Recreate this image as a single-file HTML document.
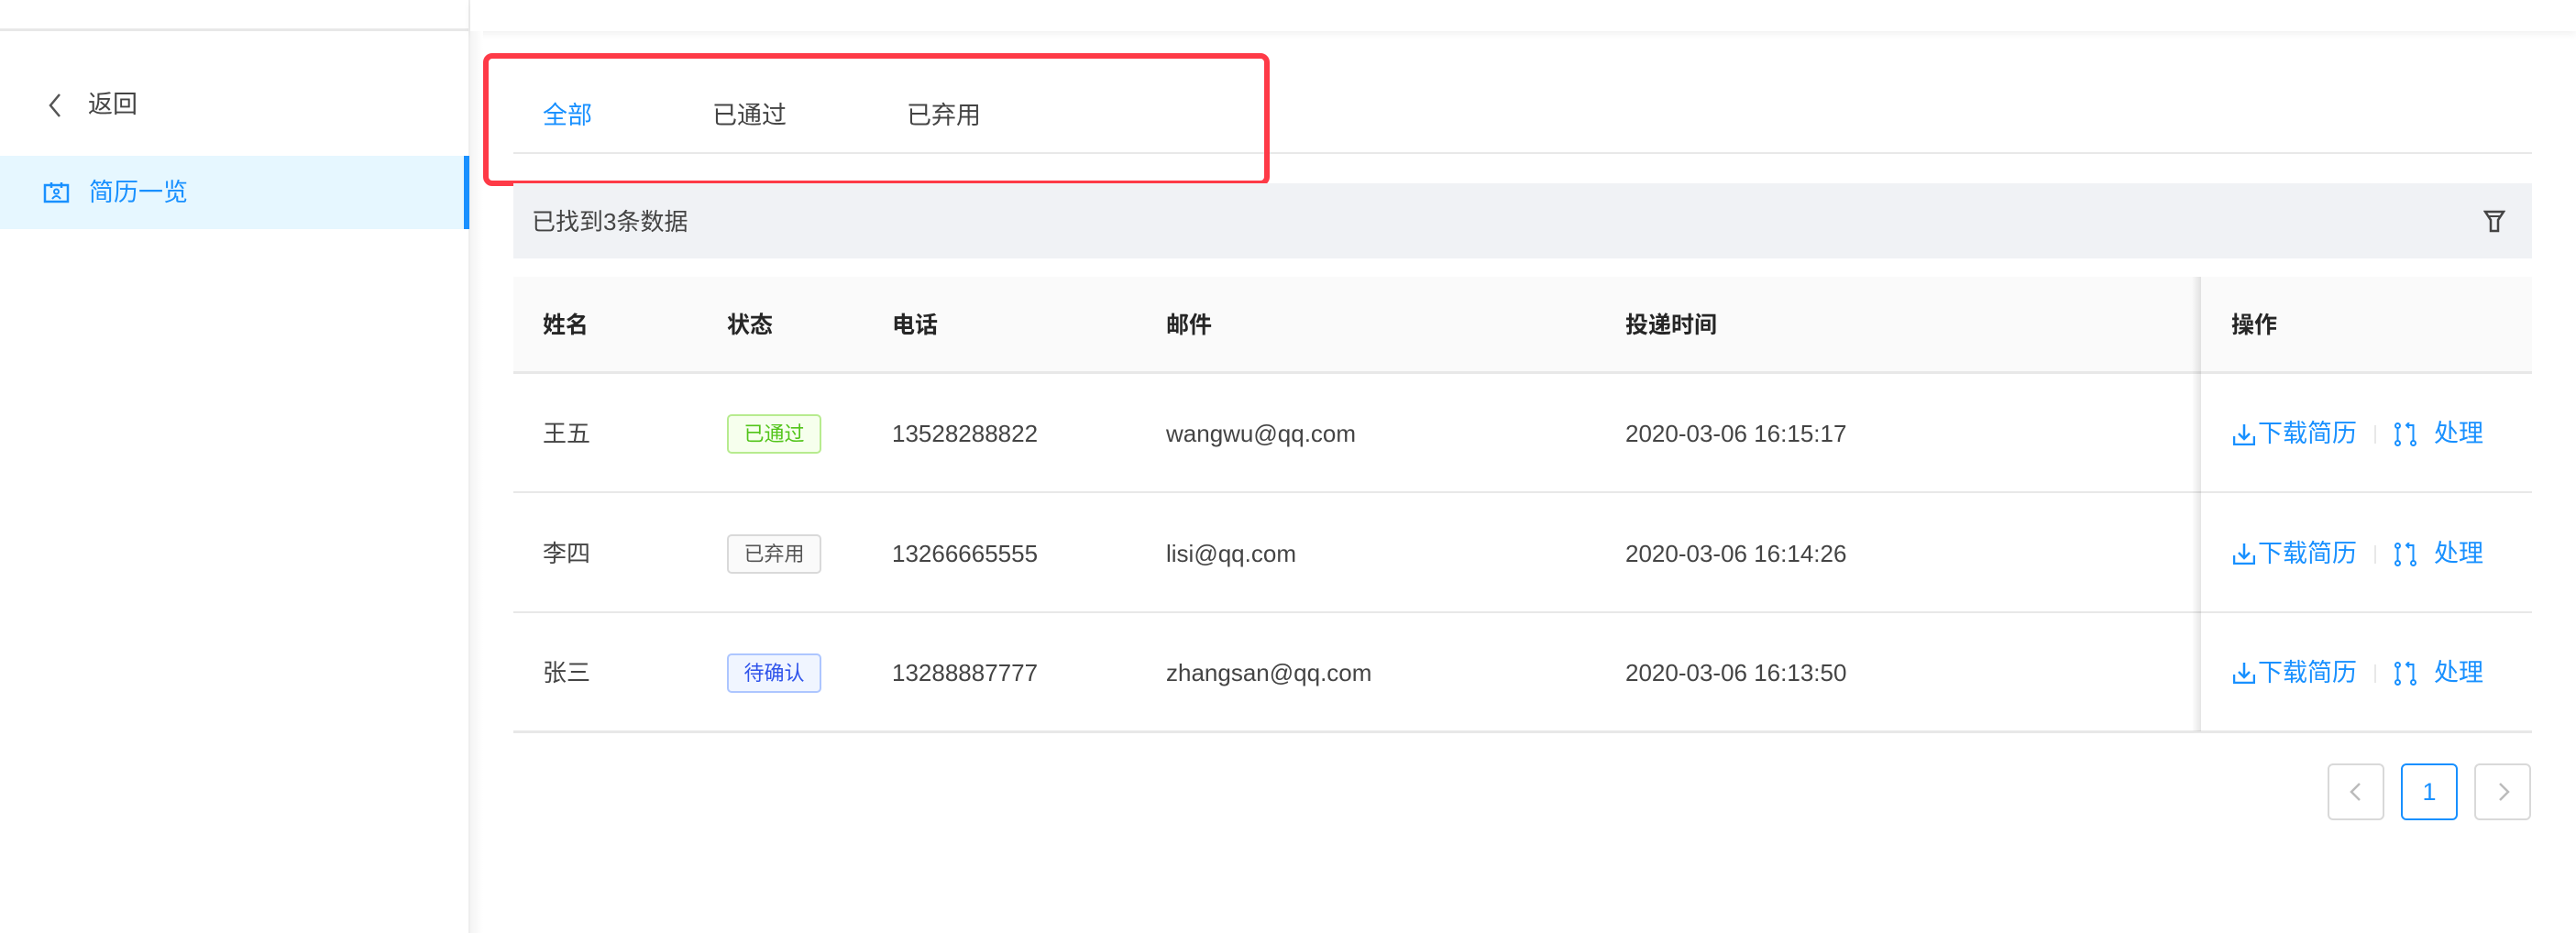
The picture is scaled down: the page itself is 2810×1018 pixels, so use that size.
<!DOCTYPE html>
<html><head><meta charset="utf-8"><style>
*{margin:0;padding:0;box-sizing:border-box}
body{width:2810px;height:1018px;background:#fff;font-family:"Liberation Sans","Noto Sans CJK SC",sans-serif;position:relative;overflow:hidden;color:#333;font-size:25px}
.a{position:absolute;white-space:nowrap;line-height:30px}
.tag{position:absolute;height:43px;width:103px;border:2px solid;border-radius:5px;font-size:22px;line-height:39px;text-align:center}
.op{color:#1890ff;font-size:27px}
.h{font-weight:bold;color:#262626}
</style></head><body>
<div class="a" style="left:0;top:0;width:512px;height:34px;border-bottom:3px solid #e8e8e8"></div>
<div class="a" style="left:511px;top:0;width:2px;height:1018px;background:#eee"></div>
<div class="a" style="left:513px;top:0;width:2297px;height:34px;box-shadow:0 3px 8px rgba(0,0,0,0.06);background:#fff"></div>
<div class="a" style="left:513px;top:34px;width:14px;height:984px;background:linear-gradient(90deg,#f4f4f4,#fff)"></div>
<svg class="a" style="left:50px;top:100px" width="20" height="30" viewBox="0 0 20 30"><path d="M15 3 L5 15 L15 27" fill="none" stroke="#555" stroke-width="2.5"/></svg>
<div class="a" style="left:96px;top:99px;font-size:27px;color:#444">返回</div>
<div class="a" style="left:0;top:170px;width:506px;height:80px;background:#e6f7ff"></div>
<div class="a" style="left:506px;top:170px;width:6px;height:80px;background:#1890ff"></div>
<svg class="a" style="left:47px;top:198px" width="30" height="24" viewBox="0 0 30 24"><rect x="2" y="4" width="25" height="18" fill="none" stroke="#1890ff" stroke-width="2.5"/><path d="M9 1v6M20 1v6" stroke="#1890ff" stroke-width="2.5"/><circle cx="14.5" cy="11" r="2.5" fill="none" stroke="#1890ff" stroke-width="2"/><path d="M10 19q4.5-6 9 0" fill="none" stroke="#1890ff" stroke-width="2"/></svg>
<div class="a" style="left:97px;top:195px;font-size:27px;color:#1890ff">简历一览</div>

<div class="a" style="left:592px;top:111px;font-size:27px;color:#1890ff">全部</div>
<div class="a" style="left:777px;top:111px;font-size:27px;color:#444">已通过</div>
<div class="a" style="left:989px;top:111px;font-size:27px;color:#444">已弃用</div>
<div class="a" style="left:560px;top:166px;width:2202px;height:2px;background:#e8e8e8"></div>
<div class="a" style="left:527px;top:58px;width:858px;height:145px;border:6px solid #fe3a47;border-radius:10px"></div>

<div class="a" style="left:560px;top:200px;width:2202px;height:82px;background:#f0f2f5"></div>
<div class="a" style="left:580px;top:227px;color:#444;font-size:26px">已找到3条数据</div>
<svg class="a" style="left:2709px;top:229px" width="24" height="26" viewBox="0 0 24 26"><path d="M2 2h20l-6 9v12h-8v-12z" fill="none" stroke="#444" stroke-width="2.5"/><path d="M5 7h14" stroke="#444" stroke-width="2"/></svg>

<div class="a" style="left:560px;top:302px;width:2202px;height:106px;background:#fafafa;border-bottom:3px solid #e8e8e8"></div>
<div class="a" style="left:560px;top:536px;width:2202px;height:2px;background:#e8e8e8"></div>
<div class="a" style="left:560px;top:667px;width:2202px;height:2px;background:#e8e8e8"></div>
<div class="a" style="left:560px;top:797px;width:2202px;height:3px;background:#e8e8e8"></div>
<div class="a" style="left:2391px;top:302px;width:10px;height:496px;background:linear-gradient(90deg,rgba(0,0,0,0),rgba(0,0,0,0.1))"></div>

<div class="a h" style="left:592px;top:340px">姓名</div>
<div class="a h" style="left:793px;top:340px">状态</div>
<div class="a h" style="left:973px;top:340px">电话</div>
<div class="a h" style="left:1272px;top:340px">邮件</div>
<div class="a h" style="left:1773px;top:340px">投递时间</div>
<div class="a h" style="left:2434px;top:340px">操作</div>

<div class="a" style="left:592px;top:458px;color:#444;font-size:26px">王五</div>
<div class="tag" style="left:793px;top:452px;border-color:#b7eb8f;background:#f6ffed;color:#52c41a">已通过</div>
<div class="a" style="left:973px;top:458px;color:#444;font-size:26px">13528288822</div>
<div class="a" style="left:1272px;top:458px;color:#444;font-size:26px">wangwu@qq.com</div>
<div class="a" style="left:1773px;top:458px;color:#444;font-size:26px">2020-03-06 16:15:17</div>

<div class="a" style="left:592px;top:589px;color:#444;font-size:26px">李四</div>
<div class="tag" style="left:793px;top:583px;border-color:#d9d9d9;background:#fafafa;color:#555">已弃用</div>
<div class="a" style="left:973px;top:589px;color:#444;font-size:26px">13266665555</div>
<div class="a" style="left:1272px;top:589px;color:#444;font-size:26px">lisi@qq.com</div>
<div class="a" style="left:1773px;top:589px;color:#444;font-size:26px">2020-03-06 16:14:26</div>

<div class="a" style="left:592px;top:719px;color:#444;font-size:26px">张三</div>
<div class="tag" style="left:793px;top:713px;border-color:#adc6ff;background:#f0f5ff;color:#2f54eb">待确认</div>
<div class="a" style="left:973px;top:719px;color:#444;font-size:26px">13288887777</div>
<div class="a" style="left:1272px;top:719px;color:#444;font-size:26px">zhangsan@qq.com</div>
<div class="a" style="left:1773px;top:719px;color:#444;font-size:26px">2020-03-06 16:13:50</div>

<!-- ops row1 -->
<svg class="a" style="left:2436px;top:462px" width="24" height="24" viewBox="0 0 24 24"><path d="M12 1v16M6 11l6 6 6-6M1 14v9h22v-9" fill="none" stroke="#1890ff" stroke-width="2.5"/></svg>
<div class="a op" style="left:2463px;top:458px">下载简历</div>
<div class="a" style="left:2590px;top:464px;width:2px;height:20px;background:#e8e8e8"></div>
<svg class="a" style="left:2612px;top:461px" width="24" height="26" viewBox="0 0 24 26"><circle cx="3.5" cy="3.5" r="2.5" fill="none" stroke="#1890ff" stroke-width="2"/><circle cx="3.5" cy="22.5" r="2.5" fill="none" stroke="#1890ff" stroke-width="2"/><circle cx="20.5" cy="22.5" r="2.5" fill="none" stroke="#1890ff" stroke-width="2"/><path d="M3.5 6v14M20.5 20V3H13M16 0l-3 3 3 3" fill="none" stroke="#1890ff" stroke-width="2"/></svg>
<div class="a op" style="left:2655px;top:458px">处理</div>

<svg class="a" style="left:2436px;top:592px" width="24" height="24" viewBox="0 0 24 24"><path d="M12 1v16M6 11l6 6 6-6M1 14v9h22v-9" fill="none" stroke="#1890ff" stroke-width="2.5"/></svg>
<div class="a op" style="left:2463px;top:589px">下载简历</div>
<div class="a" style="left:2590px;top:595px;width:2px;height:20px;background:#e8e8e8"></div>
<svg class="a" style="left:2612px;top:592px" width="24" height="26" viewBox="0 0 24 26"><circle cx="3.5" cy="3.5" r="2.5" fill="none" stroke="#1890ff" stroke-width="2"/><circle cx="3.5" cy="22.5" r="2.5" fill="none" stroke="#1890ff" stroke-width="2"/><circle cx="20.5" cy="22.5" r="2.5" fill="none" stroke="#1890ff" stroke-width="2"/><path d="M3.5 6v14M20.5 20V3H13M16 0l-3 3 3 3" fill="none" stroke="#1890ff" stroke-width="2"/></svg>
<div class="a op" style="left:2655px;top:589px">处理</div>

<svg class="a" style="left:2436px;top:722px" width="24" height="24" viewBox="0 0 24 24"><path d="M12 1v16M6 11l6 6 6-6M1 14v9h22v-9" fill="none" stroke="#1890ff" stroke-width="2.5"/></svg>
<div class="a op" style="left:2463px;top:719px">下载简历</div>
<div class="a" style="left:2590px;top:725px;width:2px;height:20px;background:#e8e8e8"></div>
<svg class="a" style="left:2612px;top:722px" width="24" height="26" viewBox="0 0 24 26"><circle cx="3.5" cy="3.5" r="2.5" fill="none" stroke="#1890ff" stroke-width="2"/><circle cx="3.5" cy="22.5" r="2.5" fill="none" stroke="#1890ff" stroke-width="2"/><circle cx="20.5" cy="22.5" r="2.5" fill="none" stroke="#1890ff" stroke-width="2"/><path d="M3.5 6v14M20.5 20V3H13M16 0l-3 3 3 3" fill="none" stroke="#1890ff" stroke-width="2"/></svg>
<div class="a op" style="left:2655px;top:719px">处理</div>

<!-- pagination -->
<div class="a" style="left:2539px;top:833px;width:62px;height:62px;border:2px solid #d9d9d9;border-radius:6px"></div>
<svg class="a" style="left:2561px;top:852px" width="18" height="24" viewBox="0 0 18 24"><path d="M13 3L4 12l9 9" fill="none" stroke="#bbb" stroke-width="2.5"/></svg>
<div class="a" style="left:2619px;top:833px;width:62px;height:62px;border:2px solid #1890ff;border-radius:6px;color:#1890ff;text-align:center;line-height:58px;font-size:27px">1</div>
<div class="a" style="left:2699px;top:833px;width:62px;height:62px;border:2px solid #d9d9d9;border-radius:6px"></div>
<svg class="a" style="left:2722px;top:852px" width="18" height="24" viewBox="0 0 18 24"><path d="M5 3l9 9-9 9" fill="none" stroke="#bbb" stroke-width="2.5"/></svg>
</body></html>
